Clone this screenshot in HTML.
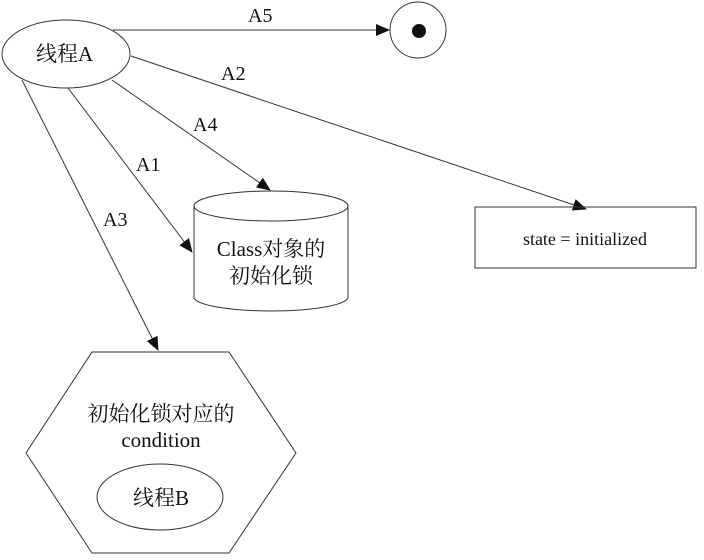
<!DOCTYPE html><html><head><style>body{margin:0;background:#fff}svg{display:block}text{font-family:"Liberation Serif","Noto Serif CJK SC",serif;fill:#111}</style></head><body>
<svg width="704" height="560" viewBox="0 0 704 560">
<defs><marker id="a" markerWidth="14" markerHeight="12" refX="13" refY="6" orient="auto" markerUnits="userSpaceOnUse"><path d="M0,0 L14,6 L0,12 Z" fill="#111"/></marker></defs>
<g stroke="#333" stroke-width="1" fill="none">
<ellipse cx="66" cy="54" rx="64" ry="34" fill="#fff"/>
<circle cx="418" cy="30" r="28"/>
<line x1="113" y1="30" x2="389" y2="30" marker-end="url(#a)"/>
<line x1="131" y1="56" x2="586" y2="209" marker-end="url(#a)"/>
<line x1="112" y1="80" x2="270" y2="190" marker-end="url(#a)"/>
<line x1="68" y1="88" x2="192" y2="252" marker-end="url(#a)"/>
<line x1="22" y1="80" x2="158" y2="350" marker-end="url(#a)"/>
<path d="M194,206 L194,297 A77,14 0 0 0 348,297 L348,206"/>
<ellipse cx="271" cy="206" rx="77" ry="15"/>
<rect x="475" y="207" width="221" height="61"/>
<polygon points="92,352 229,352 296,453 229,553 92,553 26,453"/>
<ellipse cx="160" cy="497" rx="63" ry="33"/>
</g>
<circle cx="419" cy="31" r="7" fill="#111"/>
<g font-size="20">
<text x="36" y="61" font-size="21">线程A</text>
<text x="248" y="22">A5</text>
<text x="221" y="80">A2</text>
<text x="193" y="131">A4</text>
<text x="136" y="171">A1</text>
<text x="103" y="226">A3</text>
<text x="271" y="256" text-anchor="middle" font-size="21">Class对象的</text>
<text x="271" y="283" text-anchor="middle" font-size="21">初始化锁</text>
<text x="585" y="245" text-anchor="middle" font-size="18">state = initialized</text>
<text x="161" y="421" text-anchor="middle" font-size="21">初始化锁对应的</text>
<text x="161" y="447" text-anchor="middle" font-size="21">condition</text>
<text x="161" y="505" text-anchor="middle" font-size="21">线程B</text>
</g>
</svg></body></html>
